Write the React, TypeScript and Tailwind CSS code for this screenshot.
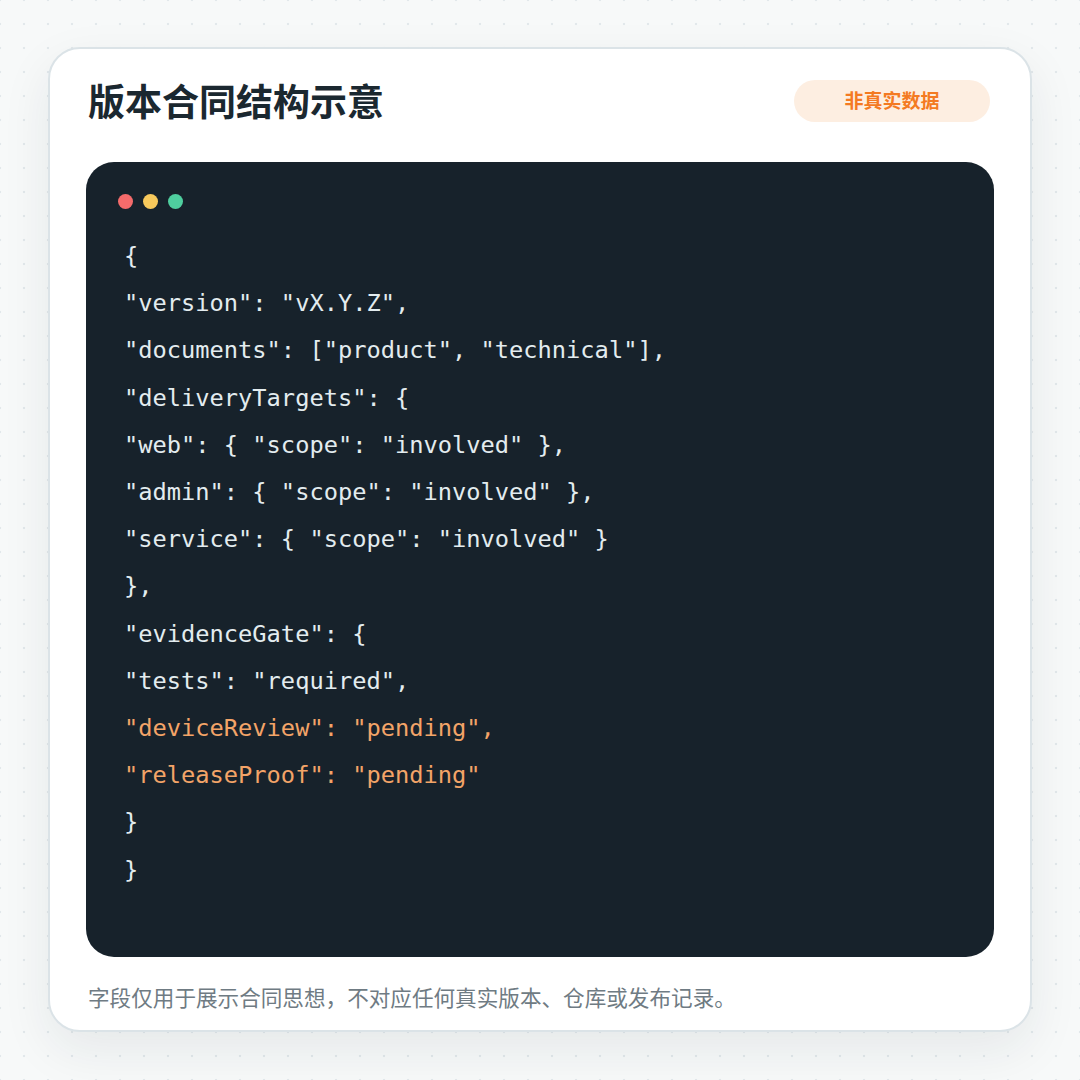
import React from "react"

const lines: { text: string; hot?: boolean }[] = [
  { text: "{" },
  { text: '"version": "vX.Y.Z",' },
  { text: '"documents": ["product", "technical"],' },
  { text: '"deliveryTargets": {' },
  { text: '"web": { "scope": "involved" },' },
  { text: '"admin": { "scope": "involved" },' },
  { text: '"service": { "scope": "involved" }' },
  { text: "}," },
  { text: '"evidenceGate": {' },
  { text: '"tests": "required",' },
  { text: '"deviceReview": "pending",', hot: true },
  { text: '"releaseProof": "pending"', hot: true },
  { text: "}" },
  { text: "}" },
]

export default function App() {
  return (
    <div
      className="w-[1080px] h-[1080px] bg-[#f7f9f9] bg-[radial-gradient(circle,#e2e8eb_1px,transparent_1.6px)] bg-[size:24px_24px] bg-[position:12px_12px] pt-[47px] pl-[48px]"
      style={{ fontFamily: '"Noto Sans", "Noto Sans CJK SC", sans-serif' }}
    >
      {/* Card */}
      <div className="w-[984px] h-[985px] bg-white border-2 border-[#dbe3e7] rounded-[32px] shadow-[0_18px_50px_rgba(20,40,50,0.08)] px-[36px] pt-[31px]">
        <div className="flex items-center justify-between h-[42px]">
          <h1 className="text-[37px] leading-none font-bold text-[#1b2830] pl-[2px]">版本合同结构示意</h1>
          <div className="w-[196px] h-[42px] mr-[4px] rounded-full bg-[#fdeee1] flex items-center justify-center text-[19px] font-bold text-[#f47a22]">
            非真实数据
          </div>
        </div>

        {/* Code block */}
        <div className="mt-[40px] h-[795px] rounded-[28px] bg-[#17222b] pt-[32px]">
          <div className="flex gap-[10px] pl-[32px]">
            <span className="w-[15px] h-[15px] rounded-full bg-[#f46b6b]" />
            <span className="w-[15px] h-[15px] rounded-full bg-[#f7c95c]" />
            <span className="w-[15px] h-[15px] rounded-full bg-[#4fcf9f]" />
          </div>
          <div
            className="mt-[24px] pl-[38px] text-[23.7px] leading-[47.2px] whitespace-pre"
            style={{ fontFamily: '"DejaVu Sans Mono", "Liberation Mono", monospace' }}
          >
            {lines.map((l, i) => (
              <div key={i} className={l.hot ? "text-[#f3a468]" : "text-[#e3ecef]"}>
                {l.text}
              </div>
            ))}
          </div>
        </div>

        <p className="mt-[26px] text-[21.6px] leading-[30px] text-[#6f7b83] pl-[2px]">
          字段仅用于展示合同思想，不对应任何真实版本、仓库或发布记录。
        </p>
      </div>
    </div>
  )
}
